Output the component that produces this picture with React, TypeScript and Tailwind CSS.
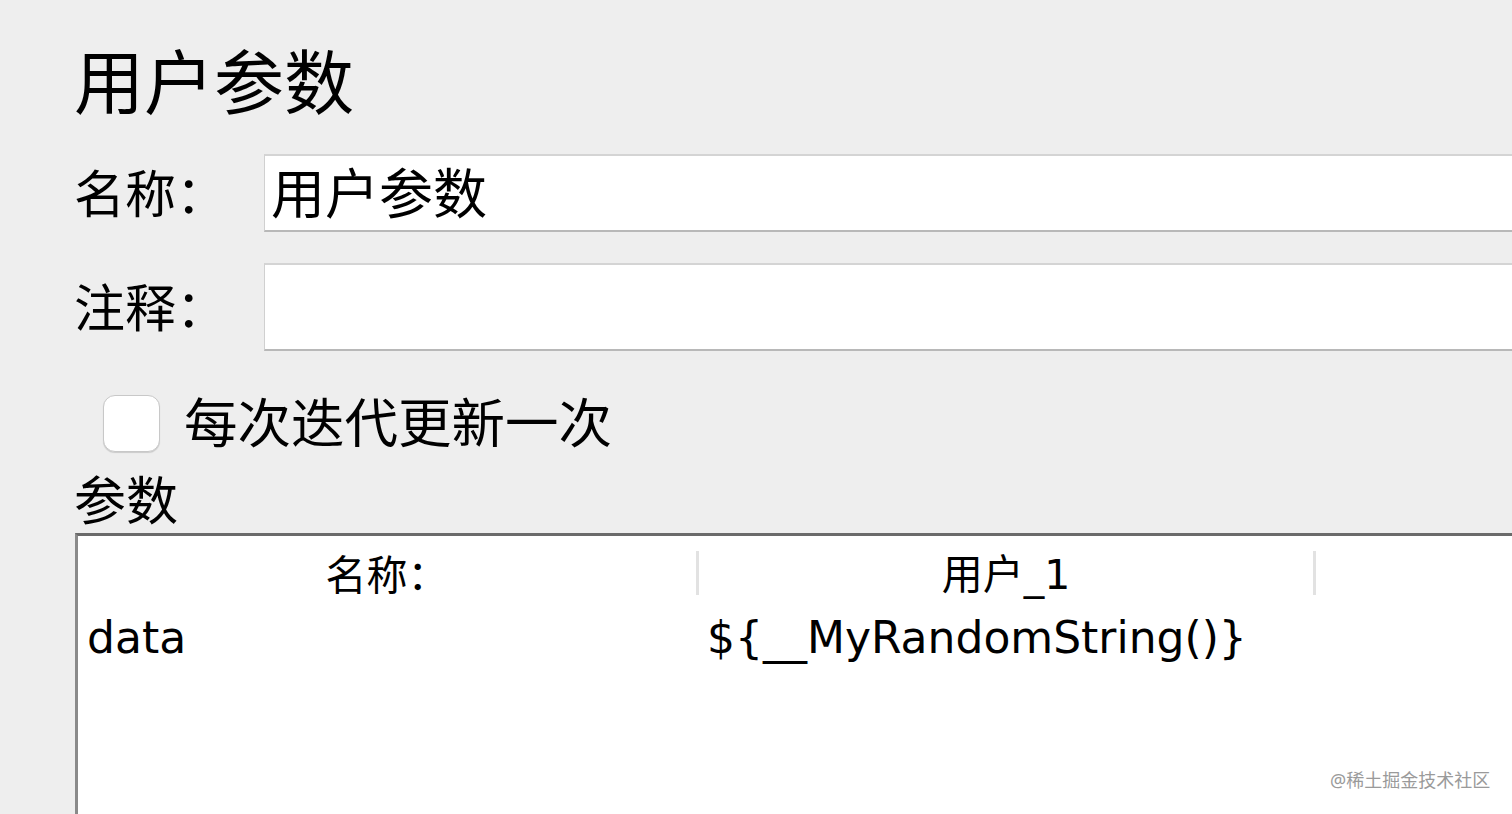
import React from "react";

const font = { fontFamily: '"Noto Sans", "Noto Sans CJK SC", sans-serif' };
const latin = { fontFamily: '"DejaVu Sans", "Noto Sans CJK SC", sans-serif' };

export default function App() {
  return (
    <div
      className="relative w-[1512px] h-[814px] overflow-hidden bg-[#eeeeee] text-black"
      style={font}
    >
      <div className="pl-[76px] pt-[38px] w-[1530px]">
        <div className="text-[70px] leading-[88px] h-[88px] -ml-[2px]">用户参数</div>
        <div className="mt-[28px] flex items-center h-[78px]">
          <div className="w-[188px] text-[51px] leading-none -ml-[2px]">名称：</div>
          <div className="flex-1 ml-[2px] h-[78px] bg-white border-t-2 border-t-[#d4d4d4] border-b-2 border-b-[#b8b8b8] border-l border-l-[#d0d0d0] flex items-center pl-[6px] text-[54px] leading-none">
            用户参数
          </div>
        </div>
        <div className="mt-[31px] flex items-center h-[88px]">
          <div className="w-[188px] text-[51px] leading-none -ml-[2px]">注释：</div>
          <div className="flex-1 ml-[2px] h-[88px] bg-white border-t-2 border-t-[#d4d4d4] border-b-2 border-b-[#b8b8b8] border-l border-l-[#d0d0d0]"></div>
        </div>
        <div className="mt-[43px] flex items-center h-[58px] pl-[27px]">
          <div className="w-[57px] h-[57px] rounded-[12px] bg-white border border-[#c8c8c8] shadow-[0_1px_1px_rgba(0,0,0,0.15)]"></div>
          <div className="ml-[24px] text-[53.5px] leading-none">每次迭代更新一次</div>
        </div>
        <div className="mt-[20px] text-[52px] leading-[56px] h-[56px] -ml-[2px]">参数</div>
        <div className="mt-[5px] ml-[-1px] h-[400px] bg-white border-t-[3px] border-t-[#6a6a6a] border-l-[3px] border-l-[#8a8a8a]">
          <div className="flex h-[74px] items-center">
            <div className="w-[618px] text-center text-[41px] leading-none pt-[2px]">名称：</div>
            <div className="w-[3px] h-[44px] bg-[#e2e2e2]"></div>
            <div className="w-[614px] text-center text-[41px] leading-none pt-[2px]">
              用户<span style={latin} className="text-[41px]">_1</span>
            </div>
            <div className="w-[3px] h-[44px] bg-[#e2e2e2]"></div>
          </div>
          <div className="flex h-[56px] items-center text-[44px] leading-none" style={latin}>
            <div className="w-[621px] pl-[9px]">data</div>
            <div className="pl-[8px] whitespace-nowrap">{"${__MyRandomString()}"}</div>
          </div>
        </div>
      </div>
      <div className="absolute left-[1330px] top-[771px] text-[18px] leading-none text-[#9a9a9a]">
        @稀土掘金技术社区
      </div>
    </div>
  );
}
